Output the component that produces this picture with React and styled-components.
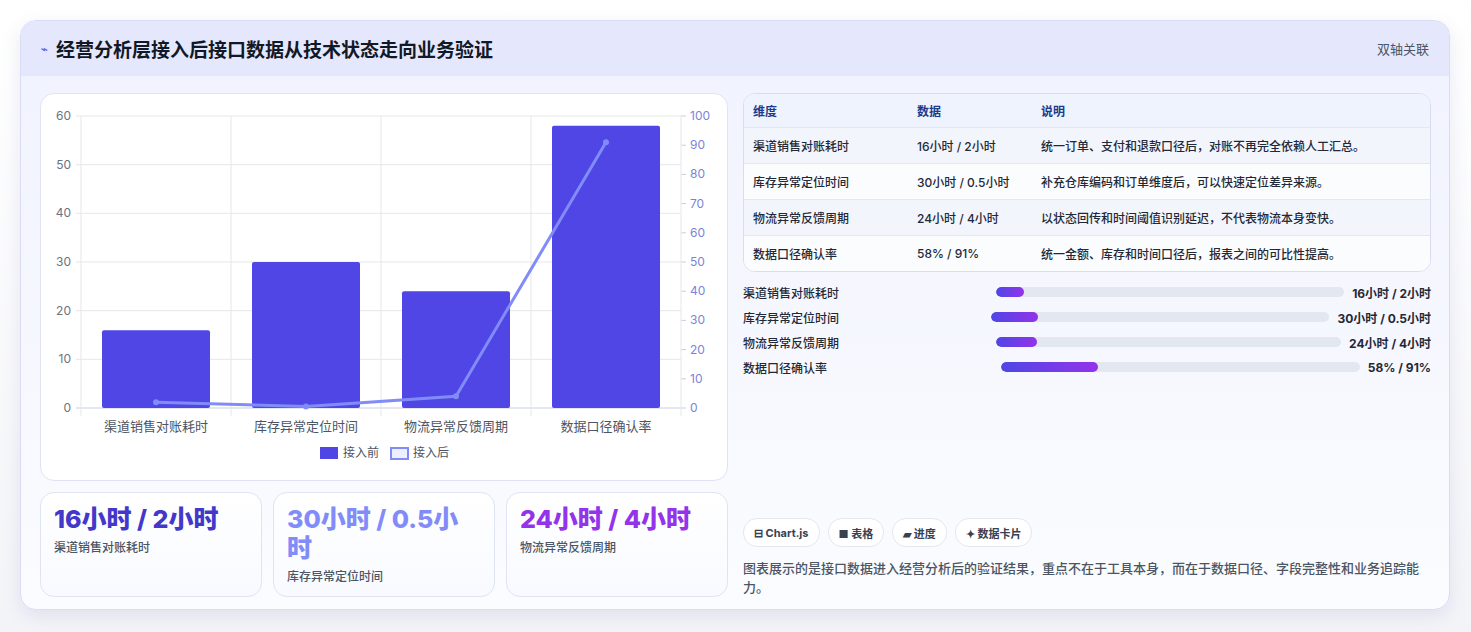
import React from "react";
import styled, { createGlobalStyle } from "styled-components";

const G = createGlobalStyle`
  body{margin:0;background:#fff;font-family:Inter,"Noto Sans CJK SC",sans-serif;}
`;
const Page = styled.div`padding:20px 21px 22px 20px;height:632px;box-sizing:border-box;background:linear-gradient(#fff,#f3f4f8);`;
const Card = styled.div`height:590px;box-sizing:border-box;border:1px solid #d9ddf3;border-radius:16px;overflow:hidden;
  background:linear-gradient(#f0f2fe,#fbfcff);box-shadow:0 6px 18px rgba(80,90,160,.12);display:flex;flex-direction:column;`;
const Header = styled.div`height:55px;flex:none;display:flex;align-items:center;justify-content:space-between;padding:0 20px;background:#e5e8fc;`;
const Title = styled.h1`margin:0;font-size:19px;font-weight:700;color:#111827;display:flex;align-items:center;gap:8px;
  span{font-size:11px;color:#6366f1;}`;
const Tag = styled.div`font-size:13px;color:#4b5563;`;
const Body = styled.div`flex:1;display:grid;grid-template-columns:688px 688px;gap:15px;padding:17px 19px 18px 19px;`;
const Col = styled.div`display:flex;flex-direction:column;gap:11px;`;
const Panel = styled.div`height:388px;box-sizing:border-box;background:#fff;border:1px solid #e0e4f2;border-radius:14px;`;
const Stats = styled.div`display:grid;grid-template-columns:repeat(3,1fr);gap:11px;flex:1;`;
const Stat = styled.div`border:1px solid #dfe4f3;border-radius:14px;background:linear-gradient(#fff,#f8faff);padding:12px 13px;`;
const Big = styled.div`font-size:25px;font-weight:800;line-height:29px;color:${p=>p.c};`;
const Small = styled.div`font-size:12px;color:#4b5563;margin-top:4px;font-weight:500;`;
const Right = styled.div`display:flex;flex-direction:column;justify-content:space-between;`;
const Table = styled.div`border:1px solid #d8ddf0;border-radius:12px;overflow:hidden;background:#fff;`;
const Row = styled.div`display:grid;grid-template-columns:164px 124px 1fr;height:${p=>p.h}px;align-items:center;padding:0 9px;
  font-size:12px;color:${p=>p.head?"#1e3a8a":"#1f2937"};font-weight:${p=>p.head?700:500};
  background:${p=>p.head?"#eef3fe":p.odd?"#f3f5fd":"#fbfcfe"};border-top:${p=>p.head?"none":"1px solid #e3e7f2"};`;
const Progs = styled.div`display:flex;flex-direction:column;gap:7px;margin-top:11px;`;
const Prog = styled.div`display:flex;align-items:center;gap:8px;font-size:12px;height:18px;color:#1f2937;`;
const PLabel = styled.div`width:${p=>p.w}px;flex:none;font-weight:500;`;
const Track = styled.div`flex:1;height:10px;border-radius:5px;background:#e2e7f0;overflow:hidden;`;
const Fill = styled.div`height:100%;border-radius:5px;background:linear-gradient(90deg,#4f46e5,#9333ea);`;
const PVal = styled.div`font-weight:700;`;
const Chips = styled.div`display:flex;gap:8px;`;
const Chip = styled.div`height:27px;padding:0 10px;border:1px solid #e4e7f0;border-radius:14px;background:#fff;font-size:11px;font-weight:700;color:#374151;display:flex;align-items:center;`;
const Note = styled.p`margin:12px 0 0;font-size:13px;line-height:19px;color:#4b5563;font-weight:500;`;

const cats=["渠道销售对账耗时","库存异常定位时间","物流异常反馈周期","数据口径确认率"];
const Chart=()=>{
  const x0=40,y0=22,w=600,h=292,bt=y0+h;
  const before=[16,30,24,58],after=[2,0.5,4,91];
  const pts=after.map((v,i)=>[x0+75+i*150,bt-v/100*h]);
  const t={fontFamily:"Inter,sans-serif",fontSize:12};
  return(<svg width="688" height="388">
    {[0,1,2,3,4,5,6].map(i=>{const y=bt-i*h/6;return <g key={i}><line x1={x0-5} x2={x0+w} y1={y} y2={y} stroke={i?"#e5e7eb":"#c8cfe0"}/><text x={x0-10} y={y+4} textAnchor="end" fill="#6b7280" {...t}>{i*10}</text></g>})}
    {[0,1,2,3,4,5,6,7,8,9,10].map(i=>{const y=bt-i*h/10;return <g key={i}><line x1={x0+w} x2={x0+w+5} y1={y} y2={y} stroke="#c8cfe0"/><text x={x0+w+9} y={y+4} fill="#7c83d6" {...t}>{i*10}</text></g>})}
    {[0,1,2,3,4].map(i=><line key={i} x1={x0+i*150} x2={x0+i*150} y1={y0} y2={bt+8} stroke="#e5e7eb"/>)}
    {before.map((v,i)=><rect key={i} x={x0+75+i*150-54} y={bt-v/60*h} width="108" height={v/60*h} rx="2" fill="#4f46e5"/>)}
    <polyline points={pts.map(p=>p.join(",")).join(" ")} fill="none" stroke="#818cf8" strokeWidth="3"/>
    {pts.map((p,i)=><circle key={i} cx={p[0]} cy={p[1]} r="3" fill="#818cf8"/>)}
    {cats.map((c,i)=><text key={i} x={x0+75+i*150} y={337} textAnchor="middle" fill="#4b5563" fontSize="13" fontFamily="Inter,'Noto Sans CJK SC',sans-serif">{c}</text>)}
    <rect x="279" y="353" width="18" height="12" fill="#4f46e5"/>
    <text x="302" y="363" fontSize="12" fill="#4b5563" fontFamily="'Noto Sans CJK SC',sans-serif">接入前</text>
    <rect x="350" y="354" width="17" height="11" fill="#eef0ff" stroke="#818cf8" strokeWidth="2"/>
    <text x="372" y="363" fontSize="12" fill="#4b5563" fontFamily="'Noto Sans CJK SC',sans-serif">接入后</text>
  </svg>);
};

const rows=[["渠道销售对账耗时","16小时 / 2小时","统一订单、支付和退款口径后，对账不再完全依赖人工汇总。"],
["库存异常定位时间","30小时 / 0.5小时","补充仓库编码和订单维度后，可以快速定位差异来源。"],
["物流异常反馈周期","24小时 / 4小时","以状态回传和时间阈值识别延迟，不代表物流本身变快。"],
["数据口径确认率","58% / 91%","统一金额、库存和时间口径后，报表之间的可比性提高。"]];
const prog=[[245,8],[240,14],[245,12],[250,27]];

export default function App(){return(<><G/><Page><Card>
  <Header><Title><span>⌁</span>经营分析层接入后接口数据从技术状态走向业务验证</Title><Tag>双轴关联</Tag></Header>
  <Body>
    <Col>
      <Panel><Chart/></Panel>
      <Stats>
        <Stat><Big c="#4338ca">16小时 / 2小时</Big><Small>渠道销售对账耗时</Small></Stat>
        <Stat><Big c="#818cf8">30小时 / 0.5小时</Big><Small>库存异常定位时间</Small></Stat>
        <Stat><Big c="#9333ea">24小时 / 4小时</Big><Small>物流异常反馈周期</Small></Stat>
      </Stats>
    </Col>
    <Right>
      <div>
        <Table>
          <Row head h={33}><div>维度</div><div>数据</div><div>说明</div></Row>
          {rows.map((r,i)=><Row key={i} h={35} odd={i%2===0}><div>{r[0]}</div><div>{r[1]}</div><div>{r[2]}</div></Row>)}
        </Table>
        <Progs>
          {rows.map((r,i)=><Prog key={i}><PLabel w={prog[i][0]}>{r[0]}</PLabel><Track><Fill style={{width:prog[i][1]+"%"}}/></Track><PVal>{r[1]}</PVal></Prog>)}
        </Progs>
      </div>
      <div>
        <Chips><Chip>⊟ Chart.js</Chip><Chip>■ 表格</Chip><Chip>▰ 进度</Chip><Chip>✦ 数据卡片</Chip></Chips>
        <Note>图表展示的是接口数据进入经营分析后的验证结果，重点不在于工具本身，而在于数据口径、字段完整性和业务追踪能力。</Note>
      </div>
    </Right>
  </Body>
</Card></Page></>);}
